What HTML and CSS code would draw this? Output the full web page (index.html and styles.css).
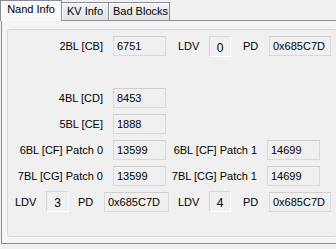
FILE: index.html
```html
<!DOCTYPE html>
<html lang="en">
<head>
    <meta charset="UTF-8">
    <title>Nand Info</title>
    <link rel="stylesheet" href="styles.css">
</head>
<body>
    <div class="tabs">
        <div class="tab active">Nand Info</div>
        <div class="tab tab-kv">KV Info</div>
        <div class="tab tab-bad">Bad Blocks</div>
    </div>
    <div class="panel">
        <div class="group">
            <div class="row row-first">
                <div class="half">
                    <span class="label">2BL [CB]</span>
                    <span class="box">6751</span>
                </div>
                <div class="ldv">
                    <span class="ldv-label">LDV</span>
                    <span class="digit">0</span>
                    <span class="pd-label">PD</span>
                    <span class="box pd">0x685C7D</span>
                </div>
            </div>
            <div class="row row-cd">
                <div class="half">
                    <span class="label">4BL [CD]</span>
                    <span class="box">8453</span>
                </div>
            </div>
            <div class="row">
                <div class="half">
                    <span class="label">5BL [CE]</span>
                    <span class="box">1888</span>
                </div>
            </div>
            <div class="row">
                <div class="half">
                    <span class="label">6BL [CF] Patch 0</span>
                    <span class="box">13599</span>
                </div>
                <div class="half right">
                    <span class="label">6BL [CF] Patch 1</span>
                    <span class="box">14699</span>
                </div>
            </div>
            <div class="row">
                <div class="half">
                    <span class="label">7BL [CG] Patch 0</span>
                    <span class="box">13599</span>
                </div>
                <div class="half right">
                    <span class="label">7BL [CG] Patch 1</span>
                    <span class="box">14699</span>
                </div>
            </div>
            <div class="row row-ldv">
                <div class="ldv ldv-left">
                    <span class="ldv-label">LDV</span>
                    <span class="digit">3</span>
                    <span class="pd-label">PD</span>
                    <span class="box pd">0x685C7D</span>
                </div>
                <div class="ldv">
                    <span class="ldv-label">LDV</span>
                    <span class="digit">4</span>
                    <span class="pd-label">PD</span>
                    <span class="box pd">0x685C7D</span>
                </div>
            </div>
        </div>
    </div>
</body>
</html>
```

FILE: styles.css
```css
body {
    margin: 0;
    background-color: #f0f0f0;
    font-family: "Liberation Sans", Arial, sans-serif;
    font-size: 11px;
    color: #000;
    overflow: hidden;
}
.tabs {
    display: flex;
    align-items: flex-end;
    height: 20px;
    position: relative;
    z-index: 1;
}
.tab {
    box-sizing: border-box;
    height: 18px;
    border: 1px solid #898c95;
    border-bottom: none;
    background: linear-gradient(#f2f2f2, #e3e3e3);
    box-shadow: inset 1px 1px 0 #fff;
    text-align: center;
    line-height: 17px;
    margin-left: -1px;
    white-space: nowrap;
}
.tab.active {
    height: 21px;
    margin-left: 0;
    margin-bottom: -1px;
    background: #f9f9f9;
    box-shadow: none;
    width: 62px;
    line-height: 16px;
}
.tab-kv {
    width: 48px;
}
.tab-bad {
    width: 62px;
    padding-left: 3px;
}
.panel {
    box-sizing: border-box;
    height: 224px;
    margin-left: 1px;
    width: 340px;
    border: 1px solid #898c95;
    background-color: #f4f4f4;
    padding: 8px 0 0 5px;
}
.group {
    box-sizing: border-box;
    width: 330px;
    height: 208px;
    border: 1px solid #d5dadf;
    border-radius: 3px;
    background-color: #f0f0f0;
    padding-top: 5px;
}
.row {
    display: flex;
    align-items: center;
    height: 20px;
    margin-top: 6px;
    white-space: nowrap;
}
.row-first {
    height: 22px;
    margin-top: 0;
}
.row-cd {
    margin-top: 31px;
}
.row-ldv {
    height: 21px;
    margin-top: 5px;
}
.half {
    display: flex;
    align-items: center;
    width: 170px;
}
.half .label {
    width: 95px;
    text-align: right;
    margin-right: 10px;
}
.half.right {
    margin-left: -8px;
}
.half.right .label {
    width: 89px;
}
.box {
    box-sizing: border-box;
    width: 53px;
    height: 20px;
    border: 1px solid #d9d9d9;
    border-top-color: #cfcfcf;
    background-color: #f0f0f0;
    padding: 2px 0 0 3px;
    line-height: 15px;
}
.ldv {
    display: flex;
    align-items: center;
}
.ldv-label {
    width: 21px;
    margin-right: 10px;
}
.digit {
    box-sizing: border-box;
    width: 22px;
    height: 21px;
    border: 1px solid #d9d9d9;
    border-right-color: #fff;
    border-bottom-color: #fff;
    text-align: center;
    font-size: 12px;
    line-height: 22px;
    margin-right: 12px;
}
.pd-label {
    width: 15px;
    margin-right: 11px;
}
.box.pd {
    width: 62px;
}
.ldv-left {
    width: 170px;
    padding-left: 7px;
    box-sizing: border-box;
}
.ldv-left .digit {
    width: 23px;
    margin-right: 9px;
}
.ldv-left .box.pd {
    width: 65px;
}
```
